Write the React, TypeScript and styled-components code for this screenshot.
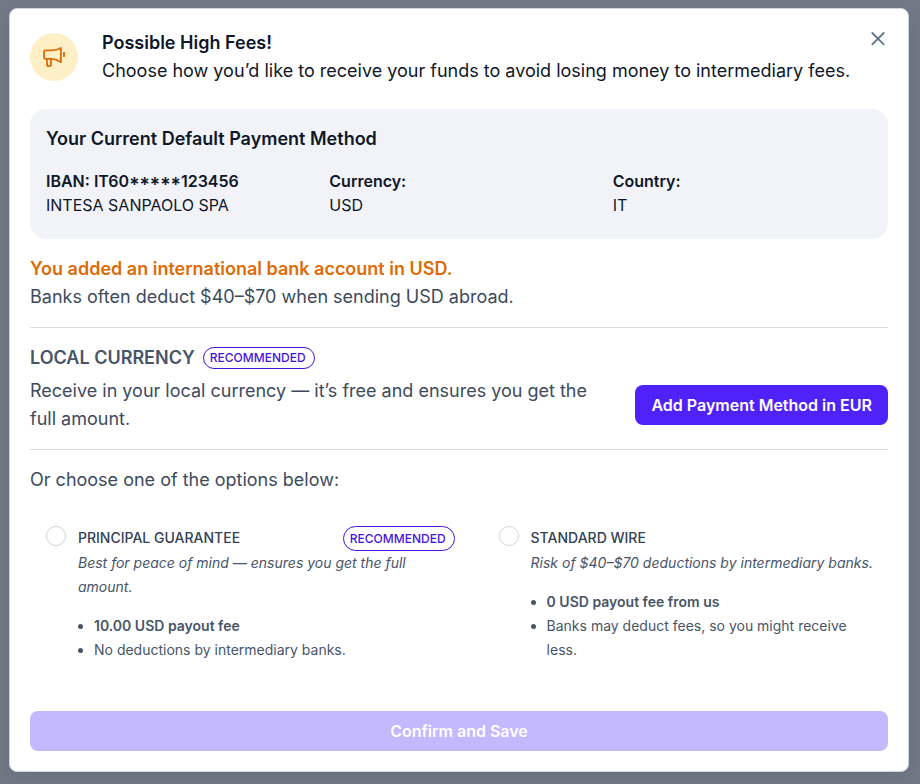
import React, { useState } from "react";
import styled, { createGlobalStyle, css } from "styled-components";

const GlobalStyle = createGlobalStyle`
  *, *::before, *::after { box-sizing: border-box; }
  body {
    margin: 0;
    background: #727986;
    font-family: Inter, "Liberation Sans", sans-serif;
    font-size: 18px;
    line-height: 28px;
    color: #475569;
  }
  h1, h2, h3, p, ul, dl, dd { margin: 0; padding: 0; }
  button { font-family: inherit; }
`;

const Overlay = styled.div`
  min-height: 100vh;
  padding: 8px 11px 12px 9px;
`;

const Dialog = styled.section`
  padding: 20px;
  background: #ffffff;
  border: 1px solid #cbd5e1;
  border-radius: 8px;
  box-shadow: 0 8px 16px rgba(15, 23, 42, 0.08);
`;

const Header = styled.header`
  display: flex;
  align-items: flex-start;
  gap: 24px;
  color: #0f172a;
`;

const IconCircle = styled.span`
  display: grid;
  place-items: center;
  flex: none;
  width: 48px;
  height: 48px;
  margin-top: 4px;
  border-radius: 50%;
  background: #ffefc6;
  color: #dd6b06;
`;

const HeaderText = styled.div`
  flex: 1;
  min-width: 0;
`;

const Title = styled.h1`
  font-size: 18px;
  font-weight: 600;
`;

const CloseButton = styled.button`
  display: grid;
  place-items: center;
  flex: none;
  width: 20px;
  height: 20px;
  margin-left: -24px;
  padding: 0;
  border: 0;
  background: none;
  color: #64748b;
  cursor: pointer;
`;

const MethodCard = styled.section`
  margin-top: 24px;
  padding: 16px 16px 22px;
  border-radius: 16px;
  background: #f2f3f8;
  color: #0f172a;
`;

const CardTitle = styled.h2`
  font-size: 18px;
  font-weight: 600;
`;

const Details = styled.dl`
  display: grid;
  grid-template-columns: repeat(3, 1fr);
  gap: 24px;
  margin-top: 16px;
  font-size: 16px;
  line-height: 24px;
`;

const DetailLabel = styled.dt`
  font-weight: 600;
`;

const Mask = styled.span`
  font-feature-settings: "tnum", "case";
`;

const Section = styled.section<{ $last?: boolean }>`
  padding: 16px 0;
  ${({ $last }) => !$last && css`border-bottom: 1px solid #d9dde3;`}
`;

const Notice = styled.h2`
  font-size: 18px;
  font-weight: 600;
  color: #dd6b06;
`;

const SectionHeading = styled.div`
  display: flex;
  align-items: center;
  gap: 8px;
  margin-bottom: 5px;
`;

const SectionTitle = styled.h2`
  font-size: 18px;
  font-weight: 600;
`;

const Badge = styled.span<{ $tall?: boolean }>`
  flex: none;
  padding: 0 8px 0 6px;
  border: 1px solid #4315dc;
  border-radius: 16px;
  color: #4315dc;
  font-size: 12px;
  font-weight: 500;
  line-height: ${({ $tall }) => ($tall ? 23 : 20)}px;
`;

const LocalRow = styled.div`
  display: flex;
  align-items: center;
  gap: 24px;
`;

const Copy = styled.p`
  flex: 1;
  color: #3d4a5e;
`;

const Button = styled.button<{ $block?: boolean }>`
  flex: none;
  width: ${({ $block }) => ($block ? "100%" : "auto")};
  height: 40px;
  padding: 0 16px;
  border: 0;
  border-radius: 8px;
  background: #4f22fa;
  color: #ffffff;
  font-size: 16px;
  font-weight: 600;
  line-height: 24px;
  cursor: pointer;
  &:disabled {
    background: #c4b8ff;
    cursor: default;
  }
`;

const Options = styled.div`
  display: grid;
  grid-template-columns: 14fr 13fr;
  gap: 16px;
  margin-bottom: 33px;
`;

const Option = styled.div`
  display: flex;
  align-items: flex-start;
  gap: 12px;
  padding: 16px 12px 16px 16px;
  font-size: 14px;
  line-height: 24px;
`;

const Radio = styled.input`
  appearance: none;
  flex: none;
  width: 20px;
  height: 20px;
  margin: 0;
  border: 1px solid #cbd5e1;
  border-radius: 50%;
  background: #ffffff;
  &:checked { border: 6px solid #4f22fa; }
`;

const OptionBody = styled.div`
  flex: 1;
  min-width: 0;
`;

const OptionHead = styled.div`
  display: flex;
  align-items: flex-start;
  justify-content: space-between;
  height: 25px;
`;

const OptionLabel = styled.label`
  color: #334155;
  font-weight: 500;
`;

const Description = styled.p`
  font-style: italic;
`;

const Facts = styled.ul`
  margin-top: 15px;
  padding-left: 16px;
  list-style: disc;
`;

const Fee = styled.strong`
  font-weight: 600;
`;

const Megaphone = () => (
  <svg width="24" height="24" viewBox="0 0 24 24" fill="none" stroke="currentColor" strokeWidth="1.8" strokeLinejoin="round" aria-hidden="true">
    <path d="M3.800 5.300H10C13 5.300 16 4.500 18.900 3V17.200C16 15.200 13 13.900 10 13.800H3.800C2.600 13.800 2 13 2 12V7C2 6 2.600 5.300 3.800 5.300Z" />
    <path d="M5 14V19.500C5 20.600 5.500 21.200 6.500 21.200H7.400C8.400 21.200 8.900 20.600 8.900 19.500V14" />
    <path d="M22 7V12" />
  </svg>
);

interface OptionData {
  id: string;
  label: string;
  description: string;
  fee: string;
  note: string;
  recommended?: boolean;
}

const options: OptionData[] = [
  {
    id: "guarantee",
    label: "PRINCIPAL GUARANTEE",
    description: "Best for peace of mind — ensures you get the full amount.",
    fee: "10.00 USD payout fee",
    note: "No deductions by intermediary banks.",
    recommended: true,
  },
  {
    id: "wire",
    label: "STANDARD WIRE",
    description: "Risk of $40–$70 deductions by intermediary banks.",
    fee: "0 USD payout fee from us",
    note: "Banks may deduct fees, so you might receive less.",
  },
];

export default function App() {
  const [selected, setSelected] = useState("");
  return (
    <>
      <GlobalStyle />
      <Overlay>
        <Dialog role="dialog" aria-labelledby="dialog-title">
          <Header>
            <IconCircle><Megaphone /></IconCircle>
            <HeaderText>
              <Title id="dialog-title">Possible High Fees!</Title>
              <p>Choose how you’d like to receive your funds to avoid losing money to intermediary fees.</p>
            </HeaderText>
            <CloseButton type="button" aria-label="Close">
              <svg width="20" height="20" viewBox="0 0 20 20" fill="none" stroke="currentColor" strokeWidth="1.8" strokeLinecap="round" aria-hidden="true">
                <path d="M4.300 4l11.400 11.400M15.700 4L4.300 15.400" />
              </svg>
            </CloseButton>
          </Header>

          <MethodCard>
            <CardTitle>Your Current Default Payment Method</CardTitle>
            <Details>
              <div>
                <DetailLabel>IBAN: IT60<Mask>*****</Mask>123456</DetailLabel>
                <dd>INTESA SANPAOLO SPA</dd>
              </div>
              <div>
                <DetailLabel>Currency:</DetailLabel>
                <dd>USD</dd>
              </div>
              <div>
                <DetailLabel>Country:</DetailLabel>
                <dd>IT</dd>
              </div>
            </Details>
          </MethodCard>

          <Section>
            <Notice>You added an international bank account in USD.</Notice>
            <Copy>Banks often deduct $40–$70 when sending USD abroad.</Copy>
          </Section>

          <Section>
            <SectionHeading>
              <SectionTitle>LOCAL CURRENCY</SectionTitle>
              <Badge>RECOMMENDED</Badge>
            </SectionHeading>
            <LocalRow>
              <Copy>Receive in your local currency — it’s free and ensures you get the full amount.</Copy>
              <Button type="button">Add Payment Method in EUR</Button>
            </LocalRow>
          </Section>

          <Section $last>
            <Copy id="options-label">Or choose one of the options below:</Copy>
          </Section>
          <Options role="radiogroup" aria-labelledby="options-label">
            {options.map((o) => (
              <Option key={o.id}>
                <Radio type="radio" name="payout" id={o.id} checked={selected === o.id} onChange={() => setSelected(o.id)} />
                <OptionBody>
                  <OptionHead>
                    <OptionLabel htmlFor={o.id}>{o.label}</OptionLabel>
                    {o.recommended && <Badge $tall>RECOMMENDED</Badge>}
                  </OptionHead>
                  <Description>{o.description}</Description>
                  <Facts>
                    <li><Fee>{o.fee}</Fee></li>
                    <li>{o.note}</li>
                  </Facts>
                </OptionBody>
              </Option>
            ))}
          </Options>
          <Button type="button" $block disabled={!selected}>Confirm and Save</Button>
        </Dialog>
      </Overlay>
    </>
  );
}
